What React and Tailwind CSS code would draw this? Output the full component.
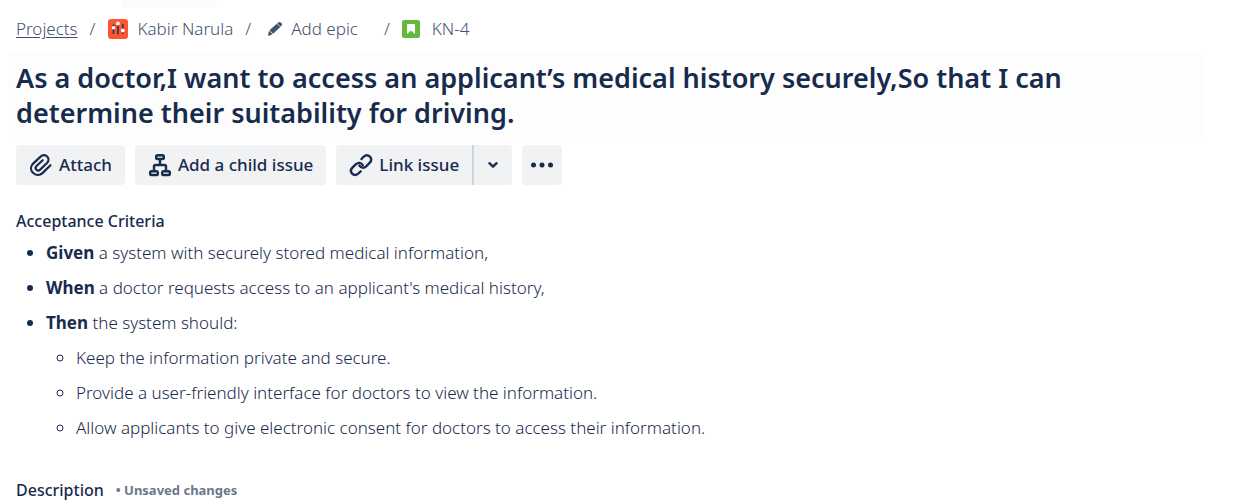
import React from "react";

function ProjectIcon() {
  return (
    <svg width="20" height="20" viewBox="0 0 20 20" aria-hidden="true">
      <rect width="20" height="20" rx="3" fill="#ff5630" />
      <g stroke="#253858" strokeWidth="1.6">
        <path d="M5.500 5.500V15" />
        <path d="M10 4v11.500" />
        <path d="M14.800 5v10" />
      </g>
      <circle cx="5.500" cy="8.800" r="1.800" fill="#fff" />
      <circle cx="10" cy="4.500" r="1.900" fill="#fff" />
      <circle cx="14.800" cy="11.500" r="1.900" fill="#fff" />
    </svg>
  );
}

function PencilIcon() {
  return (
    <svg width="16" height="16" viewBox="0 0 16 16" fill="#42526e" aria-hidden="true">
      <path d="M10.200 2.300 11.800 1.200q1-.6 1.900.2l1 1q.8.9.1 1.800l-1.300 1.600z" />
      <path d="M9.800 2.700 13.300 6.100 6.200 12.800 2.500 9.200z" />
      <path d="M2.100 9.800 5.600 13.200 2.200 14.700Q.8 15 1.100 13.600z" />
    </svg>
  );
}

function StoryIcon() {
  return (
    <svg width="18" height="18" viewBox="0 0 18 18" aria-hidden="true">
      <rect width="18" height="18" rx="2" fill="#63ba3c" />
      <path d="M5 5q0-1 1-1h6q1 0 1 1v9l-4-3.500L5 14z" fill="#fff" />
    </svg>
  );
}

function AttachIcon() {
  return (
    <svg width="24" height="24" viewBox="0 0 24 24" fill="none" stroke="#172b4d" strokeWidth="2.200" strokeLinecap="round" aria-hidden="true">
      <path d="M21.500 12.200 13.200 20.400C7.500 25.200-1.800 17.600 3.600 11.100L11.600 3.600C16.300-.6 22.300 5.600 18 10L11.200 16.600C8.400 19 5 15.800 7.500 13L13.700 7.200" />
    </svg>
  );
}

function ChildIcon() {
  return (
    <svg width="24" height="24" viewBox="0 0 24 24" fill="none" stroke="#172b4d" strokeWidth="2.400" aria-hidden="true">
      <rect x="8.200" y="2.200" width="7.600" height="3.800" rx="1.300" />
      <rect x="2.200" y="18.200" width="7.600" height="3.800" rx="1.300" />
      <rect x="14.200" y="18.200" width="7.600" height="3.800" rx="1.300" />
      <path d="M12 6v6M6 18v-4.500q0-1.500 1.500-1.500h9q1.500 0 1.500 1.500V18" />
    </svg>
  );
}

function LinkIcon() {
  return (
    <svg width="24" height="24" viewBox="0 0 24 24" fill="none" stroke="#172b4d" strokeWidth="2.400" strokeLinecap="round" aria-hidden="true">
      <path d="M12.500 6 14.500 3.800C19-.1 25 5.400 20.800 9.700L17.200 13.400C14.900 15.400 12.100 15 10.400 12.600" />
      <path d="M11.700 18.300 9.200 20.600C4.800 24.200-.6 18.800 3.400 14.700L7 11.100C9.300 9.100 12.200 9.500 13.800 12.100" />
    </svg>
  );
}

function Separator({ wide }) {
  return <span aria-hidden="true" className={wide ? "pl-6 pr-3" : "px-3"}>/</span>;
}

const button =
  "flex h-10 cursor-pointer items-center justify-center bg-[#f1f2f4] text-[17px] font-medium text-[#172b4d] hover:bg-[#e4e6ea]";

export default function App() {
  return (
    <main className="bg-white font-['Noto_Sans',sans-serif] text-[17px] text-[#172b4d]">
      <div aria-hidden="true" className="ml-[121px] h-2 w-24 rounded-b bg-[#fafbfc]" />

      <nav aria-label="Breadcrumb" className="flex h-[42px] items-center px-4 text-[17px] font-light text-[#42526e]">
        <a href="#projects" className="underline underline-offset-2">Projects</a>
        <Separator />
        <a href="#project" className="flex items-center gap-2.5"><ProjectIcon />Kabir Narula</a>
        <Separator />
        <button type="button" className="flex cursor-pointer items-center gap-2 pr-0.5 pl-1"><PencilIcon />Add epic</button>
        <Separator wide />
        <a href="#KN-4" className="flex items-center gap-3"><StoryIcon />KN-4</a>
      </nav>

      <h1 className="mt-0.5 mr-13 ml-2 bg-[#fdfdfd] px-2 py-2 text-[27px] leading-[35px] font-semibold">
        As a doctor,I want to access an applicant’s medical history securely,So that I can determine their suitability for driving.
      </h1>

      <div className="mt-[7px] flex gap-2.5 px-4">
        <button type="button" className={`${button} gap-1.5 rounded-sm px-[13px]`}><AttachIcon />Attach</button>
        <button type="button" className={`${button} gap-1.5 rounded-sm px-[13px]`}><ChildIcon />Add a child issue</button>
        <div className="flex">
          <button type="button" className={`${button} gap-1.5 rounded-l-sm px-[13px]`}><LinkIcon />Link issue</button>
          <button type="button" aria-label="More link options" className={`${button} w-10 rounded-r-sm border-l-2 border-[#cfd3db]`}>
            <svg width="12" height="8" viewBox="0 0 12 8" fill="none" stroke="#172b4d" strokeWidth="2.400" strokeLinecap="round" strokeLinejoin="round" aria-hidden="true">
              <path d="m2.400 2.200 3.600 3.400 3.600-3.400" />
            </svg>
          </button>
        </div>
        <button type="button" aria-label="More actions" className={`${button} w-10 rounded-sm`}>
          <svg width="24" height="6" viewBox="0 0 24 6" fill="#172b4d" aria-hidden="true">
            <circle cx="3.500" cy="3" r="2.500" /><circle cx="12" cy="3" r="2.500" /><circle cx="20.500" cy="3" r="2.500" />
          </svg>
        </button>
      </div>

      <section className="px-4 pt-6">
        <h2 className="text-[16px] leading-6 font-medium">Acceptance Criteria</h2>
        <ul className="mt-2 flex list-disc flex-col gap-[11px] pl-[30px] text-[17px] leading-6 font-light">
          <li><strong className="font-bold">Given</strong> a system with securely stored medical information,</li>
          <li><strong className="font-bold">When</strong> a doctor requests access to an applicant's medical history,</li>
          <li>
            <strong className="font-bold">Then</strong> the system should:
            <ul className="mt-[11px] flex list-[circle] flex-col gap-[11px] pl-[30px]">
              <li>Keep the information private and secure.</li>
              <li>Provide a user-friendly interface for doctors to view the information.</li>
              <li>Allow applicants to give electronic consent for doctors to access their information.</li>
            </ul>
          </li>
        </ul>
      </section>

      <section className="flex items-center gap-3 px-4 pt-[38px]">
        <h2 className="text-[16px] leading-6 font-medium">Description</h2>
        <span className="text-[13px] leading-6 font-bold text-[#6b778c]">• Unsaved changes</span>
      </section>
    </main>
  );
}
